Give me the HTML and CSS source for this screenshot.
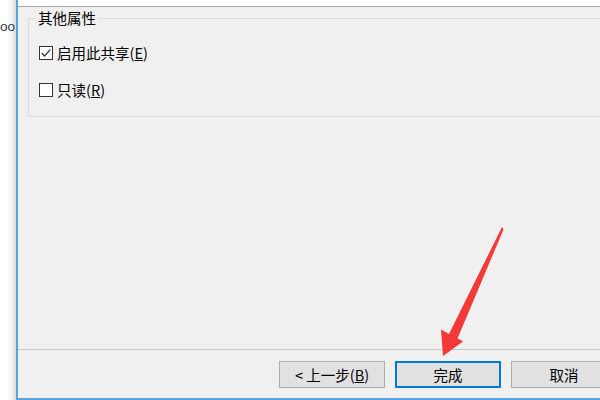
FILE: index.html
```html
<!DOCTYPE html>
<html lang="zh-CN">
<head>
<meta charset="utf-8">
<title>共享属性</title>
<link rel="stylesheet" href="styles.css">
</head>
<body>
<div class="screen">
  <div class="behind"><span class="behind-text">oo</span></div>
  <div class="window">
    <div class="header"></div>
    <div class="content">
      <div class="group">
        <span class="group-title">其他属性</span>
        <label class="check">
          <span class="box"><svg width="12" height="12" viewBox="0 0 12 12"><polyline points="1.8,6 4.6,9 10.4,2.4" fill="none" stroke="#333" stroke-width="1.2"/></svg></span>
          <span>启用此共享(<u>E</u>)</span>
        </label>
        <label class="check">
          <span class="box"></span>
          <span>只读(<u>R</u>)</span>
        </label>
      </div>
    </div>
    <div class="footer">
      <button class="btn">&lt;&nbsp;上一步(<u>B</u>)</button>
      <button class="btn btn-default">完成</button>
      <button class="btn">取消</button>
    </div>
  </div>
  <svg class="arrow" width="600" height="400" viewBox="0 0 600 400">
    <polygon points="502,227 503.5,229.5 457.5,338.5 463,341.5 443,356 441,329.5 449,334" fill="#f53838"/>
  </svg>
</div>
</body>
</html>
```
FILE: styles.css
```css
* { box-sizing: border-box; }
html, body { margin: 0; padding: 0; }
body {
  font-family: "Noto Sans CJK SC", "Noto Sans", sans-serif;
  font-size: 14.5px;
  color: #000;
  background: #fff;
}
.screen {
  position: relative;
  width: 600px;
  height: 400px;
  overflow: hidden;
  display: flex;
}
.behind {
  flex: none;
  width: 16px;
  background: linear-gradient(to right, #ffffff 45%, #f2f2f2 75%, #d9d9d9);
  padding-top: 18px;
}
.behind-text {
  display: block;
  font-family: "Liberation Sans", sans-serif;
  font-size: 13.5px;
  line-height: 18px;
  color: #2a3d55;
  white-space: nowrap;
}
.window {
  flex: none;
  width: 700px;
  height: 400px;
  display: flex;
  flex-direction: column;
  background: #f0f0f0;
  border-left: 2px solid #5aa2e0;
  border-bottom: 2px solid #5aa2e0;
}
.header {
  flex: none;
  height: 7px;
  background: #fff;
  border-bottom: 1px solid #a8a8a8;
}
.content {
  flex: 1;
  padding: 11px 0 0 10px;
}
.group {
  width: 660px;
  height: 99px;
  border: 1px solid #dcdcdc;
  display: flex;
  flex-direction: column;
  gap: 17px;
}
.group-title {
  align-self: flex-start;
  margin: -10px 0 0 7px;
  padding: 0 2px;
  background: #f0f0f0;
  line-height: 18px;
}
.check {
  display: flex;
  align-items: center;
  gap: 4px;
  height: 20px;
  margin-left: 10px;
  line-height: 20px;
}
.group-title + .check { margin-top: -1px; }
.box {
  flex: none;
  width: 14px;
  height: 14px;
  border: 1px solid #333;
  background: #fff;
  display: flex;
  align-items: center;
  justify-content: center;
}
.box svg { display: block; }
.footer {
  flex: none;
  height: 49px;
  border-top: 1px solid #c8c8c8;
  padding: 11px 0 0 261px;
  display: flex;
  align-items: flex-start;
  gap: 10px;
}
.btn {
  flex: none;
  width: 106px;
  height: 27px;
  padding: 0;
  background: #e1e1e1;
  border: 1px solid #adadad;
  font-family: inherit;
  font-size: 14.5px;
  line-height: 25px;
  color: #000;
}
.btn-default {
  border: 2px solid #0078d7;
  line-height: 23px;
}
.arrow {
  position: absolute;
  left: 0;
  top: 0;
  pointer-events: none;
}
```
